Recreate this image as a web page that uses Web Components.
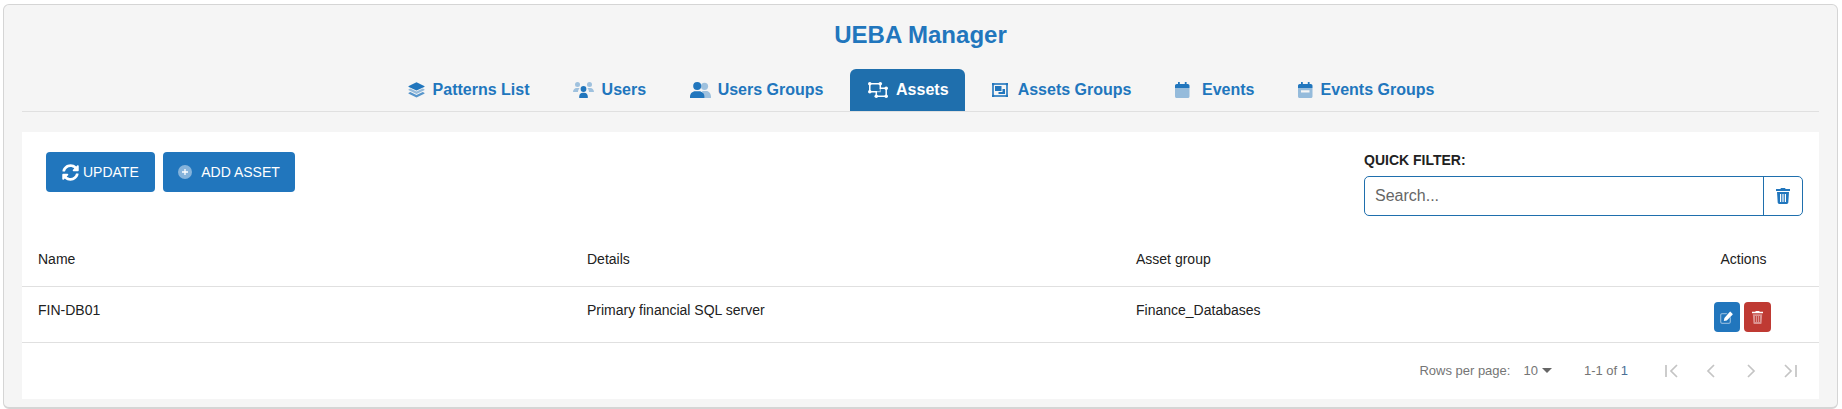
<!DOCTYPE html>
<html><head><meta charset="utf-8"><style>
html,body{margin:0;padding:0;background:#fff;font-family:"Liberation Sans",Arial,sans-serif;}
body{height:409px;overflow:hidden;}
</style></head><body>
<ueba-app></ueba-app>
<script>
const C='#2176bd';
const icons={
layers:`<svg width="17" height="16" viewBox="0 0 17 16"><path fill="#2176bd" d="M8.5 0.3 16.2 3.9c.5.3.5.8 0 1.1L8.5 8.6.8 5c-.5-.3-.5-.8 0-1.1z"/><path fill="#2176bd" opacity=".45" d="M2.3 6.5 8.5 9.4l6.2-2.9 1.5.7c.5.3.5.8 0 1.1L8.5 11.9.8 8.3c-.5-.3-.5-.8 0-1.1z"/><path fill="#2176bd" opacity=".75" d="M2.3 10 8.5 12.9l6.2-2.9 1.5.7c.5.3.5.8 0 1.1L8.5 15.6.8 11.8c-.5-.3-.5-.8 0-1.1z"/></svg>`,
users:`<svg width="21" height="16" viewBox="0 0 21 16"><g fill="#2176bd" opacity=".4"><circle cx="4.5" cy="2.6" r="2.5"/><circle cx="16.5" cy="2.6" r="2.5"/><path d="M0 10c0-2.2 1.6-4 3.6-4h1.6c.5 0 1 .1 1.4.3C5.6 7.3 5 8.6 5 10z"/><path d="M21 10c0-2.2-1.6-4-3.6-4h-1.6c-.5 0-1 .1-1.4.3 1 1 1.6 2.3 1.6 3.7z"/></g><g fill="#2176bd"><circle cx="10.5" cy="7" r="2.9"/><path d="M6.2 16v-1.6c0-2 1.6-3.6 3.6-3.6h1.400c2 0 3.600 1.600 3.600 3.600V16z"/></g></svg>`,
usergroup:`<svg width="21" height="16" viewBox="0 0 21 16"><g fill="#2176bd" opacity=".4"><circle cx="14.5" cy="4.3" r="3.6"/><path d="M12 9h4.3c2.6 0 4.7 2.5 4.7 5.6V16h-7.5c0-2.7-.5-5-1.5-7z"/></g><g fill="#2176bd"><circle cx="7.2" cy="4" r="4"/><path d="M5.3 9.2h3.8c2.9 0 5.3 2.4 5.3 5.3V16H0v-1.5c0-2.9 2.4-5.3 5.3-5.3z"/></g></svg>`,
draw:`<svg width="20" height="16" viewBox="0 0 20 16"><path fill="none" stroke="currentColor" stroke-width="1.500" d="M1.800 1.800H12.300V6.300H18.200V14.200H8.300V9.700H1.800Z"/><path fill="none" stroke="currentColor" stroke-opacity=".55" stroke-width="1.200" d="M12.300 6.300V9.700H8.300"/><g fill="currentColor"><circle cx="1.800" cy="1.800" r="1.800"/><circle cx="12.300" cy="1.800" r="1.800"/><circle cx="1.800" cy="9.700" r="1.800"/><circle cx="8.300" cy="14.200" r="1.800"/><circle cx="18.200" cy="14.200" r="1.800"/><circle cx="18.200" cy="6.300" r="1.800"/></g></svg>`,
assetgroup:`<svg width="16" height="14" viewBox="0 0 16 14"><rect x="1" y="1" width="14" height="12" fill="none" stroke="#2176bd" stroke-width="1.6"/><g fill="#2176bd"><rect x="0" y="0" width="2.2" height="2.2"/><rect x="13.8" y="0" width="2.2" height="2.2"/><rect x="0" y="11.8" width="2.2" height="2.2"/><rect x="13.8" y="11.8" width="2.2" height="2.2"/><rect x="3" y="3" width="6.5" height="5"/><path d="M10.5 6H13v5H6.5V9h4z"/></g></svg>`,
calendar:`<svg width="15" height="16" viewBox="0 0 15 16"><path fill="#2176bd" opacity=".45" d="M0 6h14.5v8.2c0 1-.7 1.8-1.6 1.8H1.6C.7 16 0 15.2 0 14.2z"/><path fill="#2176bd" d="M3 0h1.8v2h5V0h1.8v2h1.2c.9 0 1.7.8 1.7 1.7V6H0V3.7C0 2.800.8 2 1.700 2H3z"/></svg>`,
calminus:`<svg width="15" height="16" viewBox="0 0 15 16"><path fill="#2176bd" opacity=".45" fill-rule="evenodd" d="M0 6h14.5v8.2c0 1-.7 1.8-1.6 1.8H1.600C.7 16 0 15.200 0 14.200zM3 8.300v2.200h8.500V8.300z"/><path fill="#2176bd" d="M3 0h1.800v2h5V0h1.800v2h1.200c.9 0 1.700.8 1.700 1.700V6H0V3.700C0 2.800.8 2 1.700 2H3z"/></svg>`,
refresh:`<svg width="17" height="17" viewBox="0 0 512 512"><path fill="#fff" d="M370.700 133.300C339.500 104 298.900 88 255.800 88c-77.500.1-144.300 53.200-162.800 126.900-1.300 5.400-6.100 9.200-11.700 9.200H24.100c-7.500 0-13.200-6.800-11.800-14.200C33.900 94.900 134.800 8 256 8c66.400 0 126.800 26.100 171.300 68.700L463 41c15.100-15.100 41-4.400 41 17v134c0 13.300-10.700 24-24 24H345.900c-21.400 0-32.100-25.900-17-41zM32 296h134.100c21.400 0 32.100 25.900 17 41l-41.800 41.800c31.200 29.300 71.800 45.300 114.900 45.200 77.400-.1 144.300-53.100 162.800-126.800 1.300-5.400 6.100-9.200 11.700-9.200h57.300c7.500 0 13.200 6.800 11.800 14.200C478.100 417.100 377.200 504 256 504c-66.400 0-126.800-26.100-171.300-68.700L49 471c-15.100 15.100-41 4.400-41-17V320c0-13.300 10.700-24 24-24z"/></svg>`,
plus:`<svg width="14" height="14" viewBox="0 0 14 14"><circle cx="7" cy="7" r="7" fill="#fff" opacity=".45"/><path d="M7 4v6M4 7h6" stroke="#fff" stroke-width="1.300"/></svg>`,
trash:`<svg width="14" height="16" viewBox="0 0 14 16"><path fill="#2176bd" d="M5 0h4l.6 1H14v2H0V1h4.400z"/><path fill="#2176bd" fill-rule="evenodd" d="M1 4h12l-.7 10.600c-.1.800-.7 1.400-1.500 1.400H3.200c-.8 0-1.400-.6-1.500-1.400zM4 6v8h1.200V6zM6.400 6v8h1.200V6zM8.800 6v8H10V6z"/></svg>`,
edit:`<svg width="13" height="13" viewBox="0 0 13 13"><path fill="#fff" opacity=".45" d="M2 2h5.500L6.300 3.300H2.300c-.5 0-1 .5-1 1v6.400c0 .5.500 1 1 1h6.400c.5 0 1-.5 1-1V7l1.300-1.200v5c0 1.200-1 2.200-2.200 2.200H2.200C1 13 0 12 0 10.800V4.200C0 3 1 2 2 2z"/><path fill="#fff" d="M10.200.4l2.300 2.300c.3.300.3.700 0 1L6.800 9.400 3.800 10l.6-3L10.100.4c0 0 0 0 .1 0z"/></svg>`,
trashw:`<svg width="11" height="13" viewBox="0 0 11 13"><path fill="#fff" d="M3.800 0h3.400l.5.800H11v1.500H0V.8h3.300z"/><path fill="#fff" opacity=".45" fill-rule="evenodd" d="M.8 3.300h9.400L9.600 12c0 .6-.5 1-1.100 1h-6c-.6 0-1.100-.4-1.100-1zM3.200 5v6h.8V5zM5.100 5v6h.8V5zM7 5v6h.8V5z"/></svg>`
};
const mk=(name,html)=>customElements.define(name,class extends HTMLElement{
  constructor(){super();this.attachShadow({mode:'open'}).innerHTML=typeof html==='function'?html(this):html;}
});
mk('ueba-tab',el=>{
  const a=el.hasAttribute('active');
  return `<style>:host{display:flex;align-items:center;height:42px;padding:0 16px 0 ${a?18:17}px;border-radius:6px 6px 0 0;font:bold 16px "Liberation Sans",sans-serif;color:${a?'#fff':C};background:${a?'#1f6fad':'transparent'};white-space:nowrap;}
  .i{display:flex;margin-right:${el.getAttribute('gap')||8}px;}</style><span class="i">${icons[el.getAttribute('icon')]}</span><slot></slot>`;
});
mk('ueba-tabs',`<style>:host{display:flex;justify-content:center;gap:10.6px;border-bottom:1px solid #e0e0e0;}</style><slot></slot>`);
mk('ueba-button',el=>`<style>:host{display:inline-flex;align-items:center;justify-content:center;height:40px;box-sizing:border-box;background:${C};color:#fff;border-radius:4px;font:14px "Liberation Sans",sans-serif;padding:0 ${el.getAttribute('pad')||16}px;}
  .i{display:flex;margin-right:${el.getAttribute('gap')||4}px}</style><span class="i">${icons[el.getAttribute('icon')]}</span><slot></slot>`);
mk('ueba-filter',`<style>:host{display:block;width:439px;font-family:"Liberation Sans",sans-serif}
 label{display:block;font:bold 14px/16px "Liberation Sans",sans-serif;color:#212121;margin-bottom:8px;}
 .b{display:flex;height:40px;box-sizing:border-box;border:1px solid #1f6fad;border-radius:5px;}
 .s{flex:1;font-size:16px;color:#666;padding-left:10px;display:flex;align-items:center;}
 .t{width:39px;box-sizing:border-box;border-left:1px solid #1f6fad;display:flex;align-items:center;justify-content:center;}</style>
 <label>QUICK FILTER:</label><div class="b"><div class="s">Search...</div><div class="t">${icons.trash}</div></div>`);
mk('ueba-toolbar',`<style>:host{display:flex;justify-content:space-between;align-items:flex-start;padding:20px 16px 0 24px;height:91px;box-sizing:border-box;}
 .l{display:flex;gap:8px}</style><div class="l"><slot name="left"></slot></div><slot name="right"></slot>`);
mk('ueba-row',el=>`<style>:host{display:grid;grid-template-columns:549px 549px 1fr 154px;align-items:center;box-sizing:border-box;height:${el.getAttribute('h')}px;border-bottom:1px solid #e0e0e0;font:14px "Liberation Sans",sans-serif;color:#212121;padding:${el.getAttribute('pt')||0}px 0 ${el.getAttribute('pb')||0}px 16px;}
 ::slotted([slot=actions]){justify-self:center}
 </style><slot></slot><slot name="actions"></slot>`);
mk('ueba-act',el=>{const c=el.getAttribute('color');const w=el.getAttribute('w');
 return `<style>:host{display:flex;width:${w}px;height:30px;background:${c};border-radius:4px;align-items:center;justify-content:center}</style>${icons[el.getAttribute('icon')]}`});
mk('ueba-pager',`<style>:host{display:flex;align-items:center;height:55px;font:13px "Liberation Sans",sans-serif;color:#757575;justify-content:flex-end;}
 .r{margin-right:13px}.s{display:flex;align-items:center;gap:4px;margin-right:32px}.c{margin-right:37px}.c b{font-weight:normal;color:#4a6f96}
 .n{display:flex;gap:0;margin-right:22px}.n svg{display:block}
 </style><span class="r">Rows per page:</span><span class="s">10<svg width="10" height="5" viewBox="0 0 10 5"><path d="M0 0h10L5 5z" fill="#666"/></svg></span><span class="c">1-1 of <b>1</b></span>
 <span class="n">
 <svg style="margin-right:27px" width="14" height="14" viewBox="0 0 14 14" fill="none" stroke="#c4c4c4" stroke-width="1.700"><path d="M1 1v12M12 1 6 7l6 6"/></svg>
 <svg style="margin-right:32px" width="9" height="14" viewBox="0 0 9 14" fill="none" stroke="#c4c4c4" stroke-width="1.700"><path d="M8 1 2 7l6 6"/></svg>
 <svg style="margin-right:27px" width="9" height="14" viewBox="0 0 9 14" fill="none" stroke="#c4c4c4" stroke-width="1.700"><path d="M1 1l6 6-6 6"/></svg>
 <svg style="margin-right:0" width="14" height="14" viewBox="0 0 14 14" fill="none" stroke="#c4c4c4" stroke-width="1.700"><path d="M13 1v12M2 1l6 6-6 6"/></svg>
 </span>`);
mk('ueba-card',`<style>:host{display:block;background:#fff;height:267px;margin-top:20px}</style><slot></slot>`);
mk('ueba-app',`<style>:host{display:block;box-sizing:border-box;margin:4px 4px 0 3px;height:405px;border:1px solid #d5d5d5;border-bottom-width:2px;border-radius:6px;background:#f5f5f5;padding:0 18px 0 18px;font-family:"Liberation Sans",sans-serif}
 h1{margin:0;height:64px;text-align:center;font:bold 24px/59px "Liberation Sans",sans-serif;color:${C};}</style>
 <h1>UEBA Manager</h1>
 <ueba-tabs>
  <ueba-tab icon="layers">Patterns List</ueba-tab>
  <ueba-tab icon="users" gap="7.5">Users</ueba-tab>
  <ueba-tab icon="usergroup" gap="7">Users Groups</ueba-tab>
  <ueba-tab icon="draw" active>Assets</ueba-tab>
  <ueba-tab icon="assetgroup" gap="9.5">Assets Groups</ueba-tab>
  <ueba-tab icon="calendar" gap="12">Events</ueba-tab>
  <ueba-tab icon="calminus" gap="7.5">Events Groups</ueba-tab>
 </ueba-tabs>
 <ueba-card>
  <ueba-toolbar>
   <ueba-button slot="left" icon="refresh" pad="16">UPDATE</ueba-button>
   <ueba-button slot="left" icon="plus" gap="9" pad="15.5">ADD ASSET</ueba-button>
   <ueba-filter slot="right"></ueba-filter>
  </ueba-toolbar>
  <ueba-row h="64" pt="9"><span>Name</span><span>Details</span><span>Asset group</span><span slot="actions" style="margin-left:3px">Actions</span></ueba-row>
  <ueba-row h="56" pb="9"><span>FIN-DB01</span><span>Primary financial SQL server</span><span>Finance_Databases</span>
   <span slot="actions" style="display:flex;gap:4px;margin-top:14px"><ueba-act color="#2176bd" w="26" icon="edit"></ueba-act><ueba-act color="#bf3a33" w="27" icon="trashw"></ueba-act></span></ueba-row>
  <ueba-pager></ueba-pager>
 </ueba-card>`);
</script></body></html>
